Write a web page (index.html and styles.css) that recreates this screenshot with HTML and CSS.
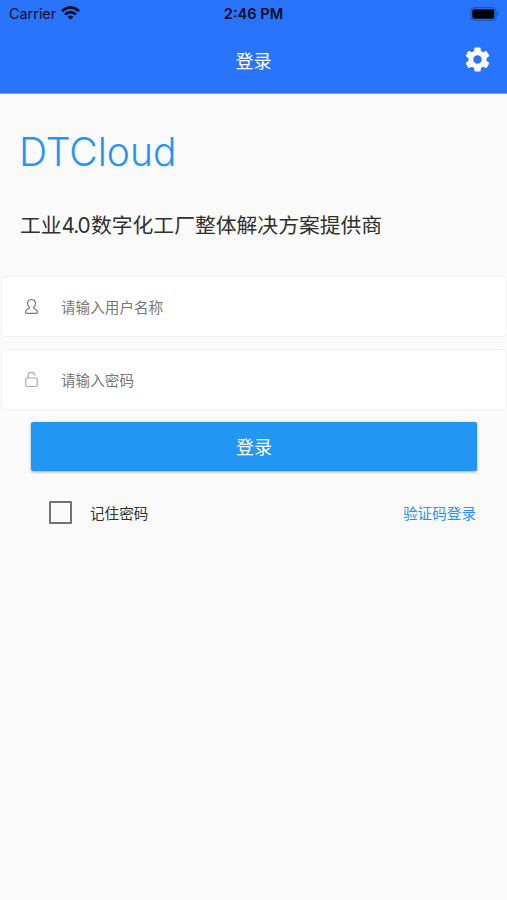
FILE: index.html
```html
<!DOCTYPE html>
<html lang="zh-CN">
<head>
<meta charset="utf-8">
<title>登录</title>
<link rel="stylesheet" href="styles.css">
</head>
<body>
<header class="top">
  <div class="status">
    <div class="carrier"><span class="carrier-name">Carrier</span>
      <svg class="wifi" width="19" height="14" viewBox="0 0 19 14" fill="none" stroke="#040d1f" stroke-width="2.8"><path d="M1 5.100Q9.500-2.300 18 5.100M4.100 8.500Q9.500 3.800 14.900 8.500"/><path d="M9.500 13.700L6.600 10.800Q9.500 8.300 12.400 10.800Z" fill="#040d1f" stroke="none"/></svg>
    </div>
    <span class="time">2:46 PM</span>
    <svg class="battery" width="30" height="14" viewBox="0 0 30 14"><rect x=".7" y=".7" width="25.300" height="12.600" rx="3.500" fill="none" stroke="#174fad"/><rect x="2.300" y="2.300" width="22" height="9.400" rx="1.800" fill="#000208"/><path d="M27.300 4.800Q29.500 7 27.300 9.200Z" fill="#174fad"/></svg>
  </div>
  <div class="bar">
    <h1 class="title">登录</h1>
    <svg class="gear" width="29" height="29" viewBox="0 0 24 24" fill="#fff"><path d="M19.430 12.980c.04-.32.07-.64.07-.98s-.03-.66-.07-.98l2.110-1.650c.19-.15.24-.42.12-.64l-2-3.460c-.12-.22-.39-.3-.61-.22l-2.490 1c-.52-.4-1.080-.73-1.690-.98l-.38-2.650C14.460 2.180 14.250 2 14 2h-4c-.25 0-.46.18-.49.42l-.38 2.650c-.61.25-1.170.59-1.690.98l-2.490-1c-.23-.09-.49 0-.61.22l-2 3.460c-.13.22-.07.49.12.64l2.110 1.650c-.04.32-.07.65-.07.98s.03.66.07.98l-2.110 1.650c-.19.15-.24.42-.12.64l2 3.460c.12.22.39.3.61.22l2.490-1c.52.4 1.080.73 1.690.98l.38 2.650c.03.24.24.42.49.42h4c.25 0 .46-.18.49-.42l.38-2.650c.61-.25 1.170-.59 1.690-.98l2.490 1c.23.09.49 0 .61-.22l2-3.460c.12-.22.07-.49-.12-.64l-2.110-1.650zM12 15.500c-1.930 0-3.500-1.570-3.500-3.500s1.570-3.500 3.500-3.500 3.500 1.570 3.500 3.500-1.570 3.500-3.500 3.500z"/></svg>
  </div>
</header>
<main>
  <h2 class="brand">DTCloud</h2>
  <p class="slogan">工业<span class="version">4.0</span>数字化工厂整体解决方案提供商</p>
  <label class="field">
    <svg width="15" height="17" viewBox="0 0 15 17" fill="none" stroke="#777" stroke-width="1.200"><path d="M5.400 9.500C2.300 6.500 3 1.500 7.500 1.500S12.700 6.500 9.600 9.500C9.300 11.300 13.500 10.800 13.500 14.200Q13.500 15.300 12.300 15.300H2.700Q1.500 15.300 1.500 14.200C1.500 10.800 5.700 11.300 5.400 9.500Z"/></svg>
    <input class="input" type="text" placeholder="请输入用户名称">
  </label>
  <label class="field">
    <svg width="15" height="17" viewBox="0 0 15 17" fill="none" stroke="#aaa" stroke-width="1.200"><rect x="1.700" y="7" width="11.600" height="8.500" rx="1.200"/><path d="M4 7V5C4 .3 10.300.3 11 4.500"/></svg>
    <input class="input" type="password" placeholder="请输入密码">
  </label>
  <button class="submit" type="button">登录</button>
  <div class="options">
    <label class="remember"><span class="box"></span><span class="text">记住密码</span></label>
    <a class="link text">验证码登录</a>
  </div>
</main>
</body>
</html>
```
FILE: styles.css
```css
* { box-sizing: border-box; }
body {
  margin: 0;
  min-height: 900px;
  background: #fafafa;
  color: #303030;
  font-family: Inter, "Noto Sans CJK SC", sans-serif;
}
h1, h2, p { margin: 0; font-weight: 400; }
svg { display: block; flex: none; }
.top { height: 94px; background: #2874fd; border-bottom: 1px solid #699ffb; }
.status {
  display: grid;
  grid-template-columns: 1fr auto 1fr;
  align-items: center;
  height: 27px;
  padding: 0 7px 0 9px;
  color: #040d1f;
}
.carrier { display: flex; align-items: center; gap: 5px; margin-top: -1px; font-size: 14.400px; }
.time { margin-left: -2px; font-size: 14.600px; font-weight: 600; }
.battery { justify-self: end; }
.bar {
  display: grid;
  grid-template-columns: 1fr auto 1fr;
  align-items: center;
  height: 66px;
  padding: 0 15px;
}
.title { grid-column: 2; padding-bottom: 1px; font-size: 18px; color: #fff; }
.gear { justify-self: end; margin-bottom: 1px; }
.brand {
  margin: 34px 0 0 19px;
  font-size: 39px;
  line-height: 48px;
  font-weight: 300;
  color: #2196f3;
}
.slogan {
  margin: 35px 0 35px 20px;
  font-size: 20.800px;
  line-height: 30px;
  white-space: nowrap;
}
.version { display: inline-block; width: 29.400px; letter-spacing: -1.100px; }
.field {
  display: flex;
  align-items: center;
  gap: 22px;
  height: 61px;
  margin: 0 0 12px 1px;
  padding-left: 22px;
  background: #fff;
  border: 1px solid #f1f1f1;
  border-radius: 5px;
}
.input {
  flex: 1;
  min-width: 0;
  padding: 0;
  border: 0;
  outline: 0;
  background: none;
  font: 14.600px/24px "Noto Sans CJK SC", sans-serif;
}
.input::placeholder { color: #777; opacity: 1; }
.submit {
  display: block;
  width: 446px;
  height: 49px;
  margin: 0 0 0 31px;
  padding: 0 0 1px;
  border: 0;
  border-radius: 2px;
  background: #2196f3;
  box-shadow: 0 1px 3px rgba(0, 0, 0, .35);
  color: #fff;
  font: 18px/48px "Noto Sans CJK SC", sans-serif;
}
.options {
  display: flex;
  justify-content: space-between;
  align-items: center;
  height: 24px;
  margin: 29px 31px 0 49px;
  font-size: 14.600px;
}
.remember { display: flex; align-items: center; gap: 18px; }
.box { width: 23px; height: 23px; border: 2px solid #727272; border-radius: 1px; }
.link { color: #2196f3; }
```
